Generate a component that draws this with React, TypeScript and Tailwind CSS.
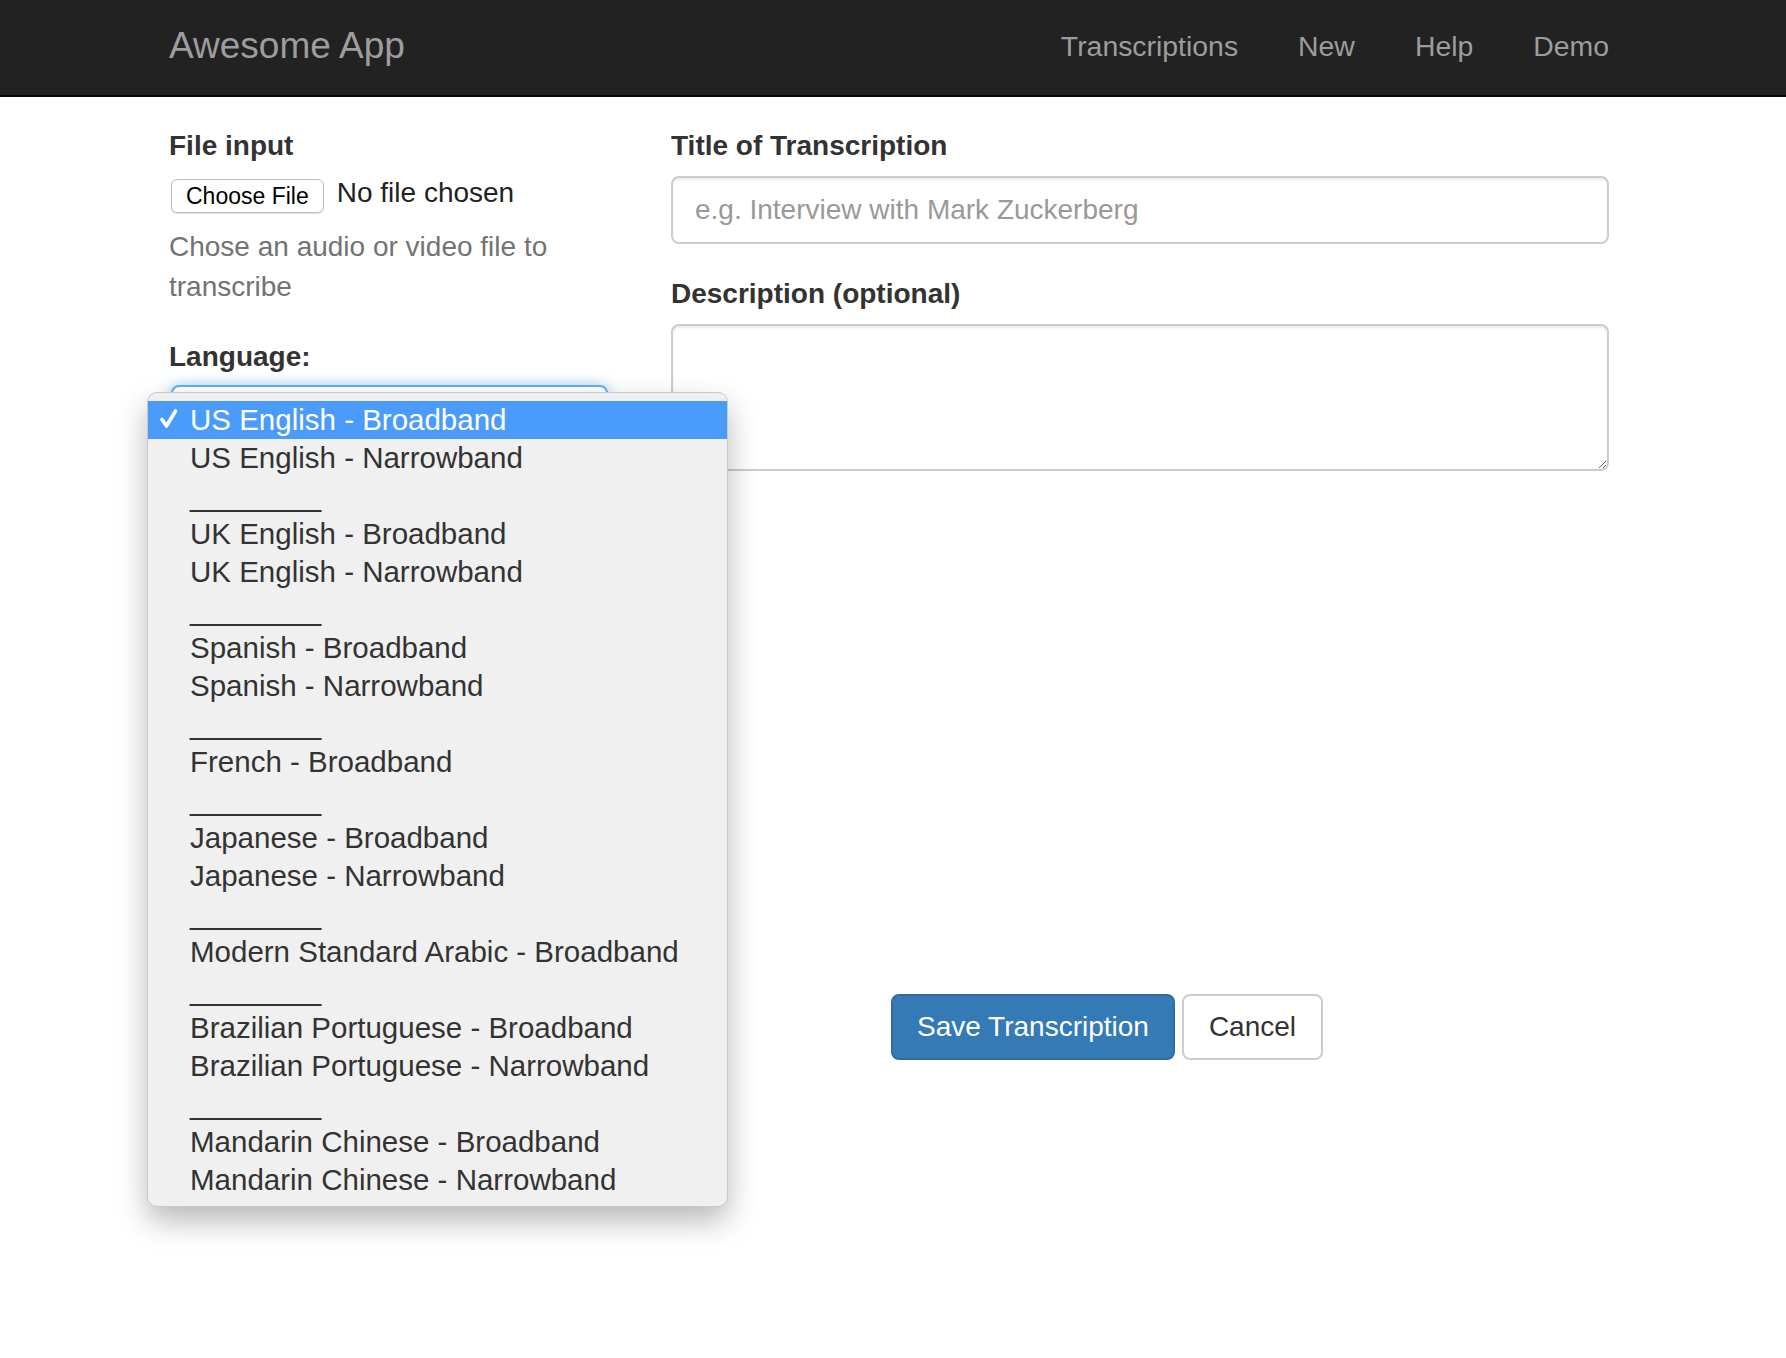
import React from "react";

const SEP = "________";

const languages = [
  "US English - Broadband",
  "US English - Narrowband",
  SEP,
  "UK English - Broadband",
  "UK English - Narrowband",
  SEP,
  "Spanish - Broadband",
  "Spanish - Narrowband",
  SEP,
  "French - Broadband",
  SEP,
  "Japanese - Broadband",
  "Japanese - Narrowband",
  SEP,
  "Modern Standard Arabic - Broadband",
  SEP,
  "Brazilian Portuguese - Broadband",
  "Brazilian Portuguese - Narrowband",
  SEP,
  "Mandarin Chinese - Broadband",
  "Mandarin Chinese - Narrowband",
];

function Navbar() {
  return (
    <nav className="h-[97px] bg-[#222] border-b-2 border-[#080808]">
      <div className="w-[1440px] ml-[169px] h-[95px] flex items-center justify-between pb-[4px]">
        <a className="text-[37px] leading-[40px] text-[#9d9d9d]">Awesome App</a>
        <ul className="flex text-[28.4px] leading-[40px] text-[#9d9d9d]">
          <li className="px-[30px]">Transcriptions</li>
          <li className="px-[30px]">New</li>
          <li className="px-[30px]">Help</li>
          <li className="pl-[30px]">Demo</li>
        </ul>
      </div>
    </nav>
  );
}

function LanguagePopup() {
  return (
    <div className="absolute left-[-22px] top-[7px] z-10 w-[581px] rounded-[10px] border border-[#c9c9c9] bg-[#f0f0f0] pt-[8px] pb-[7px] shadow-[0_14px_30px_rgba(0,0,0,0.28)]">
      {languages.map((lang, i) => {
        const selected = i === 0;
        return (
          <div
            key={i}
            className={
              selected
                ? "relative h-[38px] pl-[42px] text-[29.5px] leading-[38px] bg-[#4a9bfa] text-white"
                : "relative h-[38px] pl-[42px] text-[29.5px] leading-[38px] text-[#333]"
            }
          >
            {selected && (
              <svg className="absolute left-[12px] top-[8px]" width="18" height="20" viewBox="0 0 18 20">
                <path d="M2 10.5 L6.5 17 L15.5 2" fill="none" stroke="white" strokeWidth="3.6" strokeLinecap="round" strokeLinejoin="round" />
              </svg>
            )}
            {lang}
          </div>
        );
      })}
    </div>
  );
}

export default function App() {
  return (
    <div className="min-h-[1358px] bg-white font-['Liberation_Sans',Arial,sans-serif] text-[#333]">
      <Navbar />
      <main className="w-[1440px] ml-[169px] pt-[29px] flex items-start">
        <section className="w-[440px] shrink-0">
          <label className="block text-[28px] leading-[40px] font-bold mb-[10px]">File input</label>
          <div className="h-[42px] pt-[2px] flex items-start">
            <div className="mt-[1px] ml-[2px] h-[34px] px-[14px] flex items-center rounded-[6px] border border-[#bdbdbd] bg-white text-[23px] text-black shadow-[0_1px_1px_rgba(0,0,0,0.12)]">
              Choose File
            </div>
            <span className="ml-[13px] text-[28px] leading-[30px] text-[#222]">No file chosen</span>
          </div>
          <p className="mt-[9px] text-[28px] leading-[40px] text-[#737373]">
            Chose an audio or video file to transcribe
          </p>
          <label className="block mt-[30px] text-[28px] leading-[40px] font-bold mb-[8px]">Language:</label>
          <div className="relative">
            <div className="ml-[2px] w-[437px] h-[68px] rounded-[8px] border-2 border-[#66afe9] bg-white shadow-[0_0_14px_rgba(102,175,233,0.6)]" />
            <LanguagePopup />
          </div>
        </section>
        <section className="ml-[62px] w-[938px]">
          <label className="block text-[28px] leading-[40px] font-bold mb-[10px]">Title of Transcription</label>
          <input
            className="block w-full h-[68px] rounded-[8px] border-2 border-[#ccc] px-[22px] text-[28px] text-[#555] placeholder:text-[#999] shadow-[inset_0_2px_2px_rgba(0,0,0,0.075)] outline-none"
            placeholder="e.g. Interview with Mark Zuckerberg"
          />
          <label className="block mt-[30px] text-[28px] leading-[40px] font-bold mb-[10px]">Description (optional)</label>
          <textarea className="block w-full h-[147px] rounded-[8px] border-2 border-[#ccc] px-[22px] py-[12px] text-[28px] shadow-[inset_0_2px_2px_rgba(0,0,0,0.075)] outline-none resize-y" />
          <div className="mt-[523px] ml-[220px] flex gap-[7px]">
            <button className="h-[66px] px-[24px] rounded-[8px] border-2 border-[#2e6da4] bg-[#337ab7] text-[28px] text-white">
              Save Transcription
            </button>
            <button className="h-[66px] px-[25px] rounded-[8px] border-2 border-[#ccc] bg-white text-[28px] text-[#333]">
              Cancel
            </button>
          </div>
        </section>
      </main>
    </div>
  );
}
